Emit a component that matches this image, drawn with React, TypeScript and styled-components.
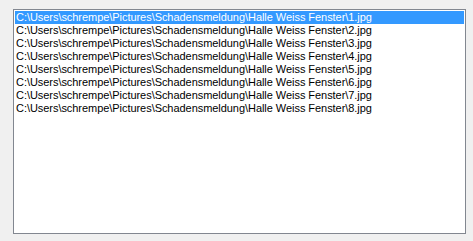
import React from "react";
import styled, { createGlobalStyle } from "styled-components";

const Global = createGlobalStyle`
  html, body {
    margin: 0;
    padding: 0;
    background: #f0f0f0;
  }
`;

const Form = styled.div`
  width: 473px;
  height: 241px;
  padding: 9px 0 0 13px;
  box-sizing: border-box;
`;

const ListBox = styled.ul`
  margin: 0;
  padding: 1px;
  list-style: none;
  width: 453px;
  height: 225px;
  box-sizing: border-box;
  background: #fff;
  border: 1px solid #828790;
  font-family: "Liberation Sans", Arial, sans-serif;
  font-size: 11px;
`;

const Item = styled.li<{ $selected?: boolean }>`
  height: 13px;
  line-height: 13px;
  padding-left: 1px;
  letter-spacing: -0.05px;
  white-space: nowrap;
  color: ${({ $selected }) => ($selected ? "#fff" : "#000")};
  background: ${({ $selected }) => ($selected ? "#3399ff" : "transparent")};
`;

const files = [1, 2, 3, 4, 5, 6, 7, 8].map(
  (n) => `C:\\Users\\schrempe\\Pictures\\Schadensmeldung\\Halle Weiss Fenster\\${n}.jpg`
);

export default function App() {
  return (
    <>
      <Global />
      <Form>
        <ListBox>
          {files.map((f, i) => (
            <Item key={f} $selected={i === 0}>
              {f}
            </Item>
          ))}
        </ListBox>
      </Form>
    </>
  );
}
